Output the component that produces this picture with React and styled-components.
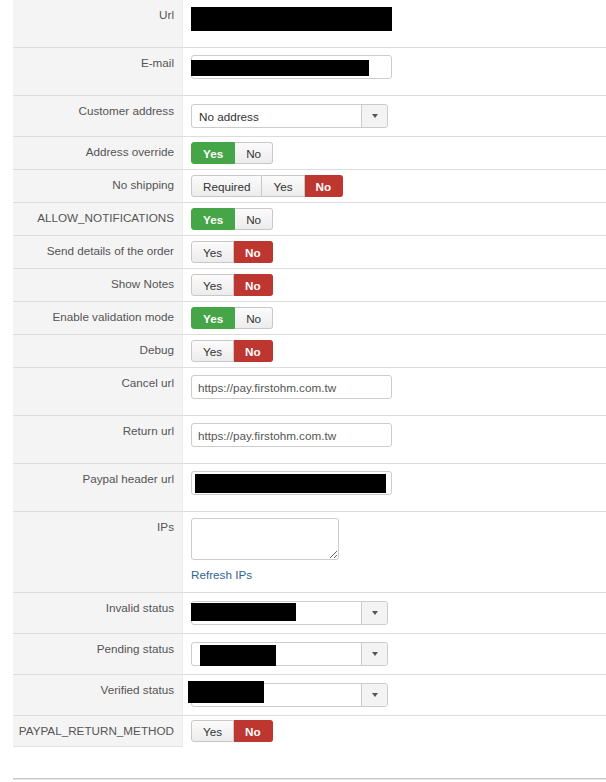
import React from 'react'
import styled, { createGlobalStyle } from 'styled-components'

const GlobalStyle = createGlobalStyle`
  html, body {
    margin: 0;
    padding: 0;
    background: #fff;
    font-family: "Liberation Sans", Arial, sans-serif;
    font-size: 11.7px;
    color: #333;
  }
`

const Page = styled.div`
  padding-left: 13px;
  overflow: hidden;
`

const Table = styled.div`
  margin-top: -1px;
  display: flex;
  flex-direction: column;
`

const Row = styled.div`
  display: flex;
  border-top: 1px solid #dcdcdc;
`

const Label = styled.div`
  width: 170px;
  flex-shrink: 0;
  box-sizing: border-box;
  background: #f4f4f4;
  border-right: 1px solid #ececec;
  text-align: right;
  padding: 7px 8px 0 0;
  line-height: 16px;
  color: #555;
  white-space: nowrap;
  ${(p) => p.$last && 'border-bottom: 1px solid #e2e2e2;'}
`

const Value = styled.div`
  flex: 1;
  padding: ${(p) => p.$top}px 8px ${(p) => p.$bottom}px 8px;
  display: flex;
  flex-direction: column;
  align-items: flex-start;
`

const Field = styled.div`
  position: relative;
  width: ${(p) => p.$w || 201}px;
  height: 24px;
  box-sizing: border-box;
  border: 1px solid #ccc;
  border-radius: 3px;
  background: #fff;
  display: flex;
  align-items: center;
  padding: 0 6px;
  color: #555;
  font-size: 11.7px;
`

const Redact = styled.span`
  position: absolute;
  background: #000;
`

const Select = styled(Field)`
  width: 197px;
  padding: 0 0 0 7px;
  color: #333;
  justify-content: space-between;
`

const SelectText = styled.span`
  flex: 1;
`

const Drop = styled.span`
  width: 25px;
  align-self: stretch;
  background: #f3f3f3;
  border-left: 1px solid #ccc;
  border-radius: 0 3px 3px 0;
  display: flex;
  align-items: center;
  justify-content: center;

  &::after {
    content: '';
    border-left: 3.5px solid transparent;
    border-right: 3.5px solid transparent;
    border-top: 4px solid #555;
  }
`

const Group = styled.div`
  display: inline-flex;
`

const Btn = styled.span`
  height: 22px;
  box-sizing: border-box;
  padding: 0 11px;
  display: flex;
  align-items: center;
  font-size: 11.7px;
  border: 1px solid #c8c8c8;
  border-left-width: 0;
  color: ${(p) => (p.$on ? '#fff' : '#333')};
  font-weight: ${(p) => (p.$on ? 'bold' : 'normal')};
  background: ${(p) =>
    p.$on === 'yes'
      ? '#46a546'
      : p.$on === 'no'
      ? '#bd362f'
      : 'linear-gradient(#fbfbfb, #ececec)'};
  ${(p) => p.$on === 'yes' && 'border-color: #46a546;'}
  ${(p) => p.$on === 'no' && 'border-color: #bd362f;'}

  &:first-child {
    border-left-width: 1px;
    border-radius: 3px 0 0 3px;
  }
  &:last-child {
    border-radius: 0 3px 3px 0;
  }
`

const TextArea = styled.textarea`
  width: 148px;
  height: 42px;
  box-sizing: border-box;
  border: 1px solid #ccc;
  border-radius: 3px;
  margin: 0;
  font-family: inherit;
`

const Link = styled.a`
  margin-top: 7px;
  line-height: 16px;
  color: #2f6792;
  text-decoration: none;
  cursor: pointer;
`

const Footer = styled.div`
  margin-top: 31px;
  border-top: 1px solid #c8c8c8;
  border-bottom: 1px solid #e6e6e6;
`

const Toggle = ({ options, active }) => (
  <Group>
    {options.map((o) => (
      <Btn key={o} $on={o === active ? (o === 'No' ? 'no' : 'yes') : undefined}>
        {o}
      </Btn>
    ))}
  </Group>
)

const ToggleRow = ({ label, options = ['Yes', 'No'], active, last }) => (
  <Row>
    <Label $last={last}>{label}</Label>
    <Value $top={last ? 4 : 5} $bottom={5}>
      <Toggle options={options} active={active} />
    </Value>
  </Row>
)

const InputRow = ({ label, children }) => (
  <Row>
    <Label>{label}</Label>
    <Value $top={7} $bottom={16}>
      {children}
    </Value>
  </Row>
)

const StatusRow = ({ label, redact }) => (
  <Row>
    <Label>{label}</Label>
    <Value $top={8} $bottom={8}>
      <Select>
        <SelectText />
        <Drop />
        <Redact style={redact} />
      </Select>
    </Value>
  </Row>
)

const App = () => {
  return (
    <Page>
      <GlobalStyle />
      <Table>
        <InputRow label="Url">
          <Field>
            <Redact style={{ left: -1, top: -1, width: 201, height: 24 }} />
          </Field>
        </InputRow>
        <InputRow label="E-mail">
          <Field>
            <Redact style={{ left: -1, top: 4, width: 178, height: 16 }} />
          </Field>
        </InputRow>
        <Row>
          <Label>Customer address</Label>
          <Value $top={8} $bottom={8}>
            <Select>
              <SelectText>No address</SelectText>
              <Drop />
            </Select>
          </Value>
        </Row>
        <ToggleRow label="Address override" active="Yes" />
        <ToggleRow label="No shipping" options={['Required', 'Yes', 'No']} active="No" />
        <ToggleRow label="ALLOW_NOTIFICATIONS" active="Yes" />
        <ToggleRow label="Send details of the order" active="No" />
        <ToggleRow label="Show Notes" active="No" />
        <ToggleRow label="Enable validation mode" active="Yes" />
        <ToggleRow label="Debug" active="No" />
        <InputRow label="Cancel url">
          <Field>https://pay.firstohm.com.tw</Field>
        </InputRow>
        <InputRow label="Return url">
          <Field>https://pay.firstohm.com.tw</Field>
        </InputRow>
        <InputRow label="Paypal header url">
          <Field>
            <Redact style={{ left: 3, top: 2, width: 191, height: 19 }} />
          </Field>
        </InputRow>
        <Row>
          <Label>IPs</Label>
          <Value $top={6} $bottom={9}>
            <TextArea />
            <Link>Refresh IPs</Link>
          </Value>
        </Row>
        <StatusRow label="Invalid status" redact={{ left: -1, top: 1, width: 105, height: 18 }} />
        <StatusRow label="Pending status" redact={{ left: 8, top: 2, width: 76, height: 21 }} />
        <StatusRow label="Verified status" redact={{ left: -4, top: -3, width: 76, height: 22 }} />
        <ToggleRow label="PAYPAL_RETURN_METHOD" active="No" last />
      </Table>
      <Footer />
    </Page>
  )
}

export default App
